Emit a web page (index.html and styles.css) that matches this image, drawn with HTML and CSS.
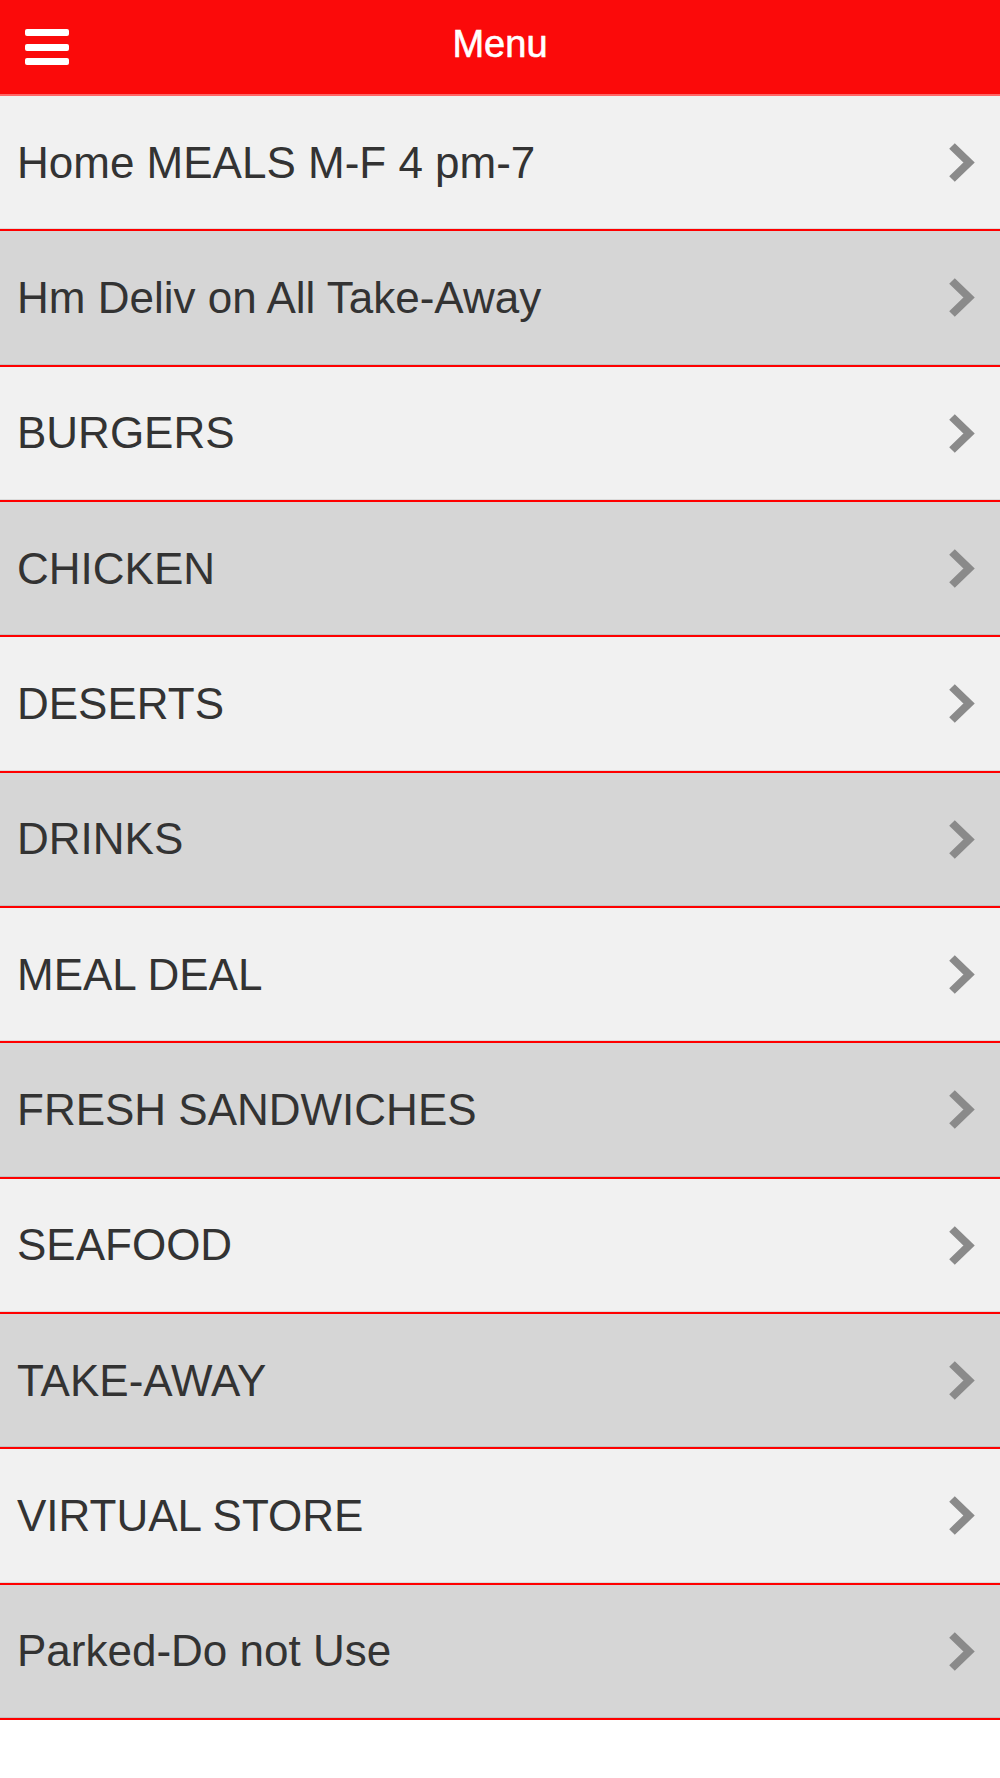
FILE: index.html
```
<!DOCTYPE html>
<html lang="en">
<head>
<meta charset="utf-8">
<title>Menu</title>
<link rel="stylesheet" href="styles.css">
</head>
<body>
<header class="topbar">
  <div class="burger"><span></span><span></span><span></span></div>
  <h1 class="title">Menu</h1>
  <div class="spacer"></div>
</header>
<ul class="list">
  <li class="item light"><span class="label">Home MEALS M-F 4 pm-7</span><svg class="chev" viewBox="0 0 27 41"><polyline points="4,4 21,20.5 4,37"/></svg></li>
  <li class="item dark"><span class="label">Hm Deliv on All Take-Away</span><svg class="chev" viewBox="0 0 27 41"><polyline points="4,4 21,20.5 4,37"/></svg></li>
  <li class="item light"><span class="label">BURGERS</span><svg class="chev" viewBox="0 0 27 41"><polyline points="4,4 21,20.5 4,37"/></svg></li>
  <li class="item dark"><span class="label">CHICKEN</span><svg class="chev" viewBox="0 0 27 41"><polyline points="4,4 21,20.5 4,37"/></svg></li>
  <li class="item light"><span class="label">DESERTS</span><svg class="chev" viewBox="0 0 27 41"><polyline points="4,4 21,20.5 4,37"/></svg></li>
  <li class="item dark"><span class="label">DRINKS</span><svg class="chev" viewBox="0 0 27 41"><polyline points="4,4 21,20.5 4,37"/></svg></li>
  <li class="item light"><span class="label">MEAL DEAL</span><svg class="chev" viewBox="0 0 27 41"><polyline points="4,4 21,20.5 4,37"/></svg></li>
  <li class="item dark"><span class="label">FRESH SANDWICHES</span><svg class="chev" viewBox="0 0 27 41"><polyline points="4,4 21,20.5 4,37"/></svg></li>
  <li class="item light"><span class="label">SEAFOOD</span><svg class="chev" viewBox="0 0 27 41"><polyline points="4,4 21,20.5 4,37"/></svg></li>
  <li class="item dark"><span class="label">TAKE-AWAY</span><svg class="chev" viewBox="0 0 27 41"><polyline points="4,4 21,20.5 4,37"/></svg></li>
  <li class="item light"><span class="label">VIRTUAL STORE</span><svg class="chev" viewBox="0 0 27 41"><polyline points="4,4 21,20.5 4,37"/></svg></li>
  <li class="item dark"><span class="label">Parked-Do not Use</span><svg class="chev" viewBox="0 0 27 41"><polyline points="4,4 21,20.5 4,37"/></svg></li>
</ul>
</body>
</html>
```
FILE: styles.css
```
html, body {
  margin: 0;
  padding: 0;
  background: #ffffff;
  font-family: "Liberation Sans", Arial, Helvetica, sans-serif;
}

.topbar {
  height: 94px;
  background: #fb0a0a;
  border-bottom: 2px solid #ff6767;
  display: flex;
  align-items: center;
  padding: 0 25px;
}

.burger {
  width: 44px;
  display: flex;
  flex-direction: column;
  gap: 7.5px;
}

.burger span {
  display: block;
  height: 7px;
  background: #ffffff;
  border-radius: 2px;
}

.title {
  flex: 1;
  margin: 0;
  text-align: center;
  color: #ffffff;
  font-size: 38px;
  font-weight: normal;
  -webkit-text-stroke: 0.6px #ffffff;
  line-height: 1;
  padding-bottom: 6px;
}

.spacer {
  width: 44px;
}

.list {
  list-style: none;
  margin: 0;
  padding: 0;
}

.item {
  box-sizing: border-box;
  height: 135.33px;
  border-bottom: 2px solid #ff0000;
  box-shadow: inset 0 -1px 0 rgba(0, 0, 0, 0.09);
  display: flex;
  align-items: center;
  justify-content: space-between;
  padding: 0 25px 0 17px;
}

.light {
  background: #f1f1f1;
}

.dark {
  background: #d6d6d6;
}

.label {
  color: #333333;
  font-size: 44px;
  line-height: 1;
}

.chev {
  width: 27px;
  height: 41px;
  fill: none;
  stroke: #8a8a8a;
  stroke-width: 8;
  stroke-linejoin: miter;
  stroke-linecap: butt;
}
```
